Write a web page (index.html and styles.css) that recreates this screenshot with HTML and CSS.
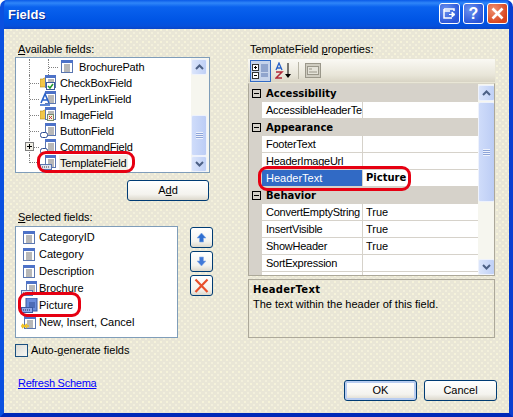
FILE: index.html
```html
<!DOCTYPE html>
<html lang="en">
<head>
<meta charset="utf-8">
<title>Fields</title>
<link rel="stylesheet" href="styles.css">
</head>
<body>
<svg class="defs" width="0" height="0" aria-hidden="true">
  <symbol id="doc" viewBox="0 0 18 16">
    <rect x="2.5" y="1.5" width="11" height="12" fill="#fff" stroke="#5a76b0"/>
    <rect x="2" y="1" width="12" height="3" fill="#4d72c8"/>
    <path d="M5 6h6M5 8h6M5 10h6M5 12h6" stroke="#707070" stroke-width="1"/>
  </symbol>
  <symbol id="doc4" viewBox="0 0 18 16">
    <rect x="5.500" y="0.500" width="10" height="12" fill="#fff" stroke="#5a76b0"/>
    <rect x="5" y="0" width="11" height="3" fill="#4d72c8"/>
    <path d="M8 5h6M8 7h6M8 9h6M8 11h6" stroke="#707070"/>
  </symbol>
  <symbol id="i-check" viewBox="0 0 18 16">
    <path d="M0 4h3l1-1h3v9H0z" fill="#f2c648" stroke="#b08a20" stroke-width=".6"/>
    <use href="#doc4" width="18" height="16"/>
    <rect x="6.500" y="7.500" width="8" height="7" fill="#fff" stroke="#3a5a9a"/>
    <path d="M8 11l2 2 3-4" fill="none" stroke="#1f9a2c" stroke-width="1.500"/>
  </symbol>
  <symbol id="i-link" viewBox="0 0 18 16">
    <use href="#doc4" width="18" height="16"/>
    <path d="M1 12L5 3l4 9M2.500 9h5" fill="#fff" stroke="#2a62c8" stroke-width="1.600"/>
    <path d="M0 14h10" stroke="#2a62c8" stroke-width="1.500"/>
  </symbol>
  <symbol id="i-image" viewBox="0 0 18 16">
    <path d="M0 4h3l1-1h3v9H0z" fill="#f2c648" stroke="#b08a20" stroke-width=".6"/>
    <use href="#doc4" width="18" height="16"/>
    <rect x="7.500" y="7.500" width="6" height="6" fill="#eef2e0" stroke="#7a8a6a"/>
    <path d="M9 9l3 3M12 9l-3 3" stroke="#c83a3a"/>
  </symbol>
  <symbol id="i-button" viewBox="0 0 18 16">
    <use href="#doc4" width="18" height="16"/>
    <rect x="0.500" y="9.500" width="7" height="5" rx="2" fill="#fff" stroke="#2a4a90"/>
  </symbol>
  <symbol id="i-tmpl" viewBox="0 0 18 16">
    <use href="#doc4" width="18" height="16"/>
    <rect x="0.500" y="9.500" width="11" height="5" fill="#dfe4f0" stroke="#5a76b0"/>
    <path d="M2 12h8" stroke="#404040" stroke-dasharray="1 1"/>
  </symbol>
  <symbol id="i-tmpl-sel" viewBox="0 0 18 16">
    <rect x="5" y="0" width="11" height="13" fill="#6a8cdc" stroke="#3a5aa0"/>
    <path d="M8 5h6M8 7h6M8 9h6" stroke="#2e4a90"/>
    <rect x="0.500" y="9.500" width="11" height="5" fill="#8fa8e8" stroke="#3a5aa0"/>
    <path d="M2 12h8" stroke="#20305a" stroke-dasharray="1 1"/>
  </symbol>
  <symbol id="i-new" viewBox="0 0 18 16">
    <use href="#doc" x="1" width="18" height="16"/>
    <path d="M0 11h8M1 9l5 4M6 9l-5 4" stroke="#eec020" stroke-width="1.300"/>
  </symbol>
</svg>

<div class="window">
  <header class="title">
    <h1 class="title-text">Fields</h1>
    <div class="title-buttons">
      <span class="tbtn">
        <svg width="13" height="11" viewBox="0 0 13 11"><path d="M1 1h10v2M1 1v9h8M1 3h6" fill="none" stroke="#fff" stroke-width="1.500"/><path d="M6 6.500h5M9 4l3 2.500L9 9z" fill="#fff" stroke="#fff"/></svg>
      </span>
      <span class="tbtn tbtn-help">?</span>
      <span class="tbtn tbtn-close">
        <svg width="13" height="13" viewBox="0 0 13 13"><path d="M1.500 1.500l10 10M11.500 1.500l-10 10" stroke="#fff" stroke-width="2.600"/></svg>
      </span>
    </div>
  </header>

  <main class="client">
    <div class="panes">
      <section class="left">
        <label class="lbl"><u>A</u>vailable fields:</label>
        <div class="tree">
          <div class="tree-rows">
            <div class="row"><i class="vline"></i><i class="twig"></i><svg class="ico"><use href="#doc"/></svg><span class="tree-text">BrochurePath</span></div>
            <div class="row"><i class="twig"></i><svg class="ico"><use href="#i-check"/></svg><span class="tree-text">CheckBoxField</span></div>
            <div class="row"><i class="twig"></i><svg class="ico"><use href="#i-link"/></svg><span class="tree-text">HyperLinkField</span></div>
            <div class="row"><i class="twig"></i><svg class="ico"><use href="#i-image"/></svg><span class="tree-text">ImageField</span></div>
            <div class="row"><i class="twig"></i><svg class="ico"><use href="#i-button"/></svg><span class="tree-text">ButtonField</span></div>
            <div class="row"><i class="twig"><b class="plus"></b></i><svg class="ico"><use href="#i-button"/></svg><span class="tree-text">CommandField</span></div>
            <div class="row"><i class="twig twig-end"></i><svg class="ico"><use href="#i-tmpl"/></svg><span class="tree-text tree-sel">TemplateField</span></div>
          </div>
          <div class="sb sb-tree">
            <span class="sb-btn"><svg width="9" height="6" viewBox="0 0 9 6"><path d="M1 5l3.500-3.500L8 5" fill="none" stroke="#4d6185" stroke-width="2"/></svg></span>
            <div class="sb-track sb-track-tree"><span class="sb-thumb"><i class="grip"></i></span></div>
            <span class="sb-btn"><svg width="9" height="6" viewBox="0 0 9 6"><path d="M1 1l3.500 3.500L8 1" fill="none" stroke="#4d6185" stroke-width="2"/></svg></span>
          </div>
        </div>
        <div class="add-row"><button class="btn btn-add">A<u>d</u>d</button></div>
        <label class="lbl lbl-sel"><u>S</u>elected fields:</label>
        <div class="sel-row">
          <ul class="list">
            <li class="item"><svg class="ico"><use href="#doc"/></svg>CategoryID</li>
            <li class="item"><svg class="ico"><use href="#doc"/></svg>Category</li>
            <li class="item"><svg class="ico"><use href="#doc"/></svg>Description</li>
            <li class="item"><svg class="ico"><use href="#i-tmpl"/></svg>Brochure</li>
            <li class="item"><svg class="ico"><use href="#i-tmpl-sel"/></svg>Picture</li>
            <li class="item"><svg class="ico"><use href="#i-new"/></svg>New, Insert, Cancel</li>
          </ul>
          <div class="mini-col">
            <button class="btn mini" aria-label="Up"><svg width="11" height="11" viewBox="0 0 11 11"><path d="M5.500 1L10 6H7.500v4h-4V6H1z" fill="#2f6fd0" stroke="#7fa8e8" stroke-width=".6"/></svg></button>
            <button class="btn mini" aria-label="Down"><svg width="11" height="11" viewBox="0 0 11 11"><path d="M5.500 10L10 5H7.500V1h-4v4H1z" fill="#3f78d8" stroke="#8fb0e8" stroke-width=".6"/></svg></button>
            <button class="btn mini" aria-label="Remove"><svg width="15" height="15" viewBox="0 0 15 15"><path d="M1.500 1.500l12 12.500M13.500 1.500L1.500 14" stroke="#e8502c" stroke-width="2.200"/></svg></button>
          </div>
        </div>
        <div class="check-row"><span class="checkbox"></span><span>Auto-<u>g</u>enerate fields</span></div>
      </section>

      <section class="right">
        <label class="lbl lbl-right">TemplateField <u>p</u>roperties:</label>
        <div class="toolbar">
          <span class="tool tool-on">
            <svg width="17" height="16" viewBox="0 0 17 16">
              <rect x=".5" y="1.500" width="6" height="6" fill="#fff" stroke="#333"/><path d="M2 4.500h3M3.500 3v3" stroke="#000"/>
              <rect x=".5" y="9.500" width="6" height="6" fill="#fff" stroke="#333"/><path d="M2 12.500h3" stroke="#000"/>
              <path d="M9 2h7M9 4h7M9 6h7M9 8h7M9 11h7M9 13h7" stroke="#5a76b0"/>
            </svg>
          </span>
          <span class="tool tool-az">
            <svg width="18" height="17" viewBox="0 0 18 17">
              <path d="M1 8l3-7 3 7M2 6h4" fill="none" stroke="#2a62c8" stroke-width="1.300"/>
              <path d="M1 10h6L1 16h6" fill="none" stroke="#b02a3a" stroke-width="1.500"/>
              <path d="M13 1v12" stroke="#000"/><path d="M10 12h6l-3 4z" fill="#000"/>
            </svg>
          </span>
          <i class="tool-sep"></i>
          <span class="tool tool-off">
            <svg width="16" height="15" viewBox="0 0 16 15">
              <rect x=".5" y=".5" width="15" height="14" fill="#cfccc0" stroke="#9a978a"/>
              <rect x="2.500" y="3.500" width="11" height="8" fill="#e4e2d8" stroke="#9a978a"/>
              <path d="M4 6h3M4 9h8" stroke="#9a978a"/>
            </svg>
          </span>
        </div>
        <div class="grid">
          <div class="grid-rows">
            <div class="grp"><b class="minus"></b>Accessibility</div>
            <div class="prop"><span class="pname">AccessibleHeaderTe</span><span class="pval"></span></div>
            <div class="grp"><b class="minus"></b>Appearance</div>
            <div class="prop"><span class="pname">FooterText</span><span class="pval"></span></div>
            <div class="prop"><span class="pname">HeaderImageUrl</span><span class="pval"></span></div>
            <div class="prop"><span class="pname pname-sel">HeaderText</span><span class="pval pval-bold">Picture</span></div>
            <div class="grp"><b class="minus"></b>Behavior</div>
            <div class="prop"><span class="pname">ConvertEmptyString</span><span class="pval">True</span></div>
            <div class="prop"><span class="pname">InsertVisible</span><span class="pval">True</span></div>
            <div class="prop"><span class="pname">ShowHeader</span><span class="pval">True</span></div>
            <div class="prop"><span class="pname">SortExpression</span><span class="pval"></span></div>
            <div class="prop"><span class="pname"></span><span class="pval"></span></div>
          </div>
          <div class="sb sb-grid">
            <span class="sb-btn"><svg width="9" height="6" viewBox="0 0 9 6"><path d="M1 5l3.500-3.500L8 5" fill="none" stroke="#4d6185" stroke-width="2"/></svg></span>
            <div class="sb-track sb-track-grid"><span class="sb-thumb sb-thumb-grid"><i class="grip"></i></span></div>
            <span class="sb-btn"><svg width="9" height="6" viewBox="0 0 9 6"><path d="M1 1l3.500 3.500L8 1" fill="none" stroke="#4d6185" stroke-width="2"/></svg></span>
          </div>
        </div>
        <div class="desc">
          <strong class="desc-title">HeaderText</strong>
          <p class="desc-text">The text within the header of this field.</p>
        </div>
      </section>
    </div>

    <footer class="foot">
      <a class="refresh" href="#">Refresh Schema</a>
      <div class="foot-btns">
        <button class="btn btn-foot btn-default">OK</button>
        <button class="btn btn-foot">Cancel</button>
      </div>
    </footer>

    <i class="oval oval-tree"></i>
    <i class="oval oval-prop"></i>
    <i class="oval oval-list"></i>
  </main>
</div>
</body>
</html>
```

FILE: styles.css
```css
* { box-sizing: border-box; }
html, body { margin: 0; padding: 0; }
body {
  width: 513px;
  height: 417px;
  overflow: hidden;
  background: #fff;
  font: 11px/13px "Liberation Sans", Arial, sans-serif;
  color: #000;
}
.defs { position: absolute; }
.window {
  width: 513px;
  height: 417px;
  display: flex;
  flex-direction: column;
  background: #0a50e0;
  border-radius: 7px 7px 0 0;
  overflow: hidden;
  border-bottom: 4px solid #0029b8;
  border-left: 4px solid #0a50e0;
  border-right: 4px solid #0a3fd0;
}
.title {
  height: 29px;
  margin: 0 -4px;
  padding: 0 5px 3px 8px;
  flex: none;
  display: flex;
  align-items: center;
  justify-content: space-between;
  background: linear-gradient(#0a5ae8 0, #2f86f8 3px, #0a62ee 7px, #0055e5 20px, #0550dc 26px, #0a45c8 29px);
}
.title-text {
  margin: 2px 0 0;
  font-size: 13px;
  font-weight: bold;
  color: #fff;
  text-shadow: 1px 1px 0 #0a2a90;
}
.title-buttons { display: flex; gap: 3px; }
.tbtn {
  width: 21px;
  height: 21px;
  display: flex;
  align-items: center;
  justify-content: center;
  border: 1px solid #fff;
  border-radius: 3px;
  background: radial-gradient(circle at 30% 30%, #6a90ee, #2a55d8 75%);
  color: #fff;
  font-weight: bold;
  font-size: 16px;
}
.tbtn-close { background: radial-gradient(circle at 30% 30%, #ee9070, #d8431c 75%); }
.client {
  position: relative;
  flex: 1;
  min-height: 0;
  padding: 12px 14px 0 11px;
  background-color: #e9e6d6;
  background-image:
    radial-gradient(circle at 1px 1px, #f6f3da .8px, transparent .9px),
    radial-gradient(circle at 1px 1px, #f3f0dc .8px, transparent .9px);
  background-size: 6px 6px, 6px 6px;
  background-position: 0 0, 3px 3px;
}
.panes {
  display: grid;
  grid-template-columns: 198px 247px;
  column-gap: 35px;
  height: 315px;
}
.lbl { display: block; padding-left: 3px; height: 16px; padding-top: 2px; }
.lbl-sel { margin-top: 9px; padding-top: 1px; }
.lbl-right { padding-left: 2px; padding-top: 1px; margin-top: 1px; height: 17px; }

/* tree */
.tree {
  width: 195px;
  height: 116px;
  display: flex;
  border: 1px solid #7f9db9;
  background: #fff;
  overflow: hidden;
}
.tree-rows { flex: 1; padding-top: 1px; min-width: 0; }
.row { display: flex; align-items: center; height: 16px; padding-left: 13px; }
.ico { width: 18px; height: 16px; flex: none; }
.vline { width: 19px; height: 16px; flex: none; border-left: 1px dotted #808080; }
.twig {
  position: relative;
  width: 11px;
  height: 16px;
  flex: none;
  border-left: 1px dotted #808080;
  background: repeating-linear-gradient(90deg, #808080 0 1px, transparent 1px 2px) center / 100% 1px no-repeat;
}
.twig-end { height: 8px; align-self: flex-start; background-position: bottom; }
.plus {
  position: absolute;
  left: -5px;
  top: 3px;
  width: 9px;
  height: 9px;
  border: 1px solid #808080;
  background:
    linear-gradient(#000, #000) center / 5px 1px no-repeat,
    linear-gradient(#000, #000) center / 1px 5px no-repeat,
    #f0eee4;
}
.tree-text { padding: 0 1px; margin-left: 1px; line-height: 16px; letter-spacing: -.15px; }
.tree-sel { background: #f0efe6; }

/* scrollbars */
.sb { width: 17px; flex: none; display: flex; flex-direction: column; background: #f6f6ef; }
.sb-tree { width: 18px; padding: 1px 2px 0 0; }
.sb-grid { padding-top: 1px; }
.sb-btn {
  height: 16px;
  flex: none;
  display: flex;
  align-items: center;
  justify-content: center;
  border: 1px solid #eef2fc;
  border-radius: 2px;
  background: linear-gradient(90deg, #dbe5fb, #bfd0f6);
}
.sb-track { flex: 1; display: flex; flex-direction: column; }
.sb-track-tree { padding-top: 40px; }
.sb-track-grid { padding-top: 1px; padding-bottom: 57px; }
.sb-thumb {
  flex: 1;
  display: flex;
  align-items: center;
  justify-content: center;
  border: 1px solid #eef2fc;
  border-radius: 2px;
  background: linear-gradient(90deg, #cfdcfa, #bccdf5);
}
.grip {
  width: 7px;
  height: 7px;
  background: repeating-linear-gradient(#eef2fc 0 1px, #8da4d8 1px 2px);
}

/* buttons */
.btn {
  font: inherit;
  padding: 0;
  color: #000;
  border: 1px solid #003c74;
  border-radius: 3px;
  background: linear-gradient(#fff, #f4f3ee 70%, #dcd8cc);
  display: flex;
  align-items: center;
  justify-content: center;
}
.add-row { display: flex; justify-content: flex-end; padding: 7px 4px 0 0; height: 28px; }
.btn-add { width: 82px; height: 21px; }
.sel-row { display: flex; gap: 12px; }
.list {
  list-style: none;
  margin: 0;
  padding: 2px 0 0 5px;
  width: 163px;
  height: 112px;
  background: #fff;
  border: 1px solid #7f9db9;
}
.item { display: flex; align-items: center; height: 17px; }
.mini-col { display: flex; flex-direction: column; gap: 3px; padding-top: 1px; }
.mini { width: 23px; height: 21px; }
.check-row { display: flex; align-items: center; gap: 3px; margin-top: 6px; height: 13px; }
.checkbox {
  width: 13px;
  height: 13px;
  border: 1px solid #1c5180;
  background: linear-gradient(135deg, #dcdcd7, #f7f7f3);
}

/* properties */
.toolbar {
  display: flex;
  align-items: center;
  height: 23px;
  padding-left: 2px;
  background: linear-gradient(#faf9f4, #e8e5d8 70%, #d8d4c4);
}
.tool { display: flex; align-items: center; justify-content: center; height: 22px; }
.tool-on { width: 21px; border: 1px solid #316ac5; background: #c6d3ea; }
.tool-az { width: 19px; margin-left: 3px; }
.tool-sep { width: 1px; height: 17px; margin: 0 5px; background: #b8b5a6; }
.tool-off { width: 18px; }
.grid {
  height: 193px;
  margin-top: 1px;
  display: flex;
  border: 1px solid #aca899;
  border-top: 1px solid #d8d5c8;
  background: #fff;
  overflow: hidden;
}
.grid-rows { width: 229px; flex: none; padding-top: 1px; background: #d6d2ca; }
.grp {
  position: relative;
  height: 17px;
  padding-left: 17px;
  background: #d6d2ca;
  font: bold 10px/17px "DejaVu Sans", Verdana, sans-serif;
}
.minus {
  position: absolute;
  left: 3px;
  top: 4px;
  width: 9px;
  height: 9px;
  border: 1px solid #000;
  background: linear-gradient(#000, #000) center / 5px 1px no-repeat;
}
.prop { display: flex; height: 17px; padding-left: 13px; background: #d6d2ca; }
.pname, .pval {
  background: #fff;
  border-bottom: 1px solid #d6d2ca;
  line-height: 16px;
  white-space: nowrap;
  overflow: hidden;
}
.pname { width: 101px; padding-left: 4px; border-right: 1px solid #d6d2ca; letter-spacing: -.25px; }
.pval { flex: 1; padding-left: 3px; }
.pname-sel { background: #316ac5; color: #fff; letter-spacing: 0; }
.pval-bold { font: bold 10px/16px "DejaVu Sans", Verdana, sans-serif; }
.desc {
  height: 59px;
  margin-top: 3px;
  padding: 2px 4px;
  border: 1px solid #aca899;
}
.desc-title { display: block; font: bold 10px/15px "DejaVu Sans", Verdana, sans-serif; letter-spacing: .3px; }
.desc-text { margin: 1px 0 0; }

/* footer */
.foot {
  display: flex;
  justify-content: space-between;
  margin-top: 20px;
  margin-right: -2px;
  padding-left: 3px;
}
.refresh { color: #0000ff; margin-top: 1px; letter-spacing: -.25px; }
.foot-btns { display: flex; gap: 7px; margin-top: 4px; }
.btn-foot { width: 73px; height: 21px; }
.btn-default { box-shadow: inset 0 0 0 2px #b9cdf0; }

/* call-outs */
.oval {
  position: absolute;
  border: 3px solid #e60012;
  border-radius: 9px;
}
.oval-tree { left: 33px; top: 122px; width: 98px; height: 22px; }
.oval-prop { left: 254px; top: 137px; width: 153px; height: 25px; }
.oval-list { left: 14px; top: 263px; width: 63px; height: 25px; }
```
